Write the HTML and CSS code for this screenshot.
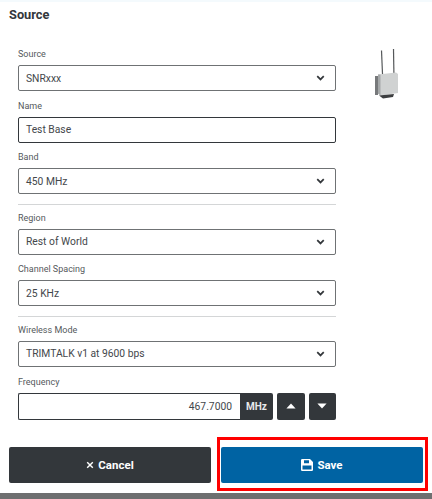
FILE: index.html
```html
<!DOCTYPE html>
<html lang="en">
<head>
    <meta charset="UTF-8">
    <meta name="viewport" content="width=device-width, initial-scale=1.0">
    <title>Source</title>
    <link rel="stylesheet" href="styles.css">
</head>
<body>

    <div class="page">
        <h1 class="title">Source</h1>

        <div class="content">
            <form class="fields">
                <div class="field">
                    <label class="label">Source</label>
                    <div class="box select"><span>SNRxxx</span><svg class="chevron" viewBox="0 0 10 7"><path d="M1.200 1.400 5 5.200l3.800-3.800"/></svg></div>
                </div>
                <div class="field">
                    <label class="label">Name</label>
                    <div class="box text"><span>Test Base</span></div>
                </div>
                <div class="field">
                    <label class="label">Band</label>
                    <div class="box select"><span>450 MHz</span><svg class="chevron" viewBox="0 0 10 7"><path d="M1.200 1.400 5 5.200l3.800-3.800"/></svg></div>
                </div>

                <hr class="divider">

                <div class="field">
                    <label class="label">Region</label>
                    <div class="box select"><span>Rest of World</span><svg class="chevron" viewBox="0 0 10 7"><path d="M1.200 1.400 5 5.200l3.800-3.800"/></svg></div>
                </div>
                <div class="field">
                    <label class="label">Channel Spacing</label>
                    <div class="box select"><span>25 KHz</span><svg class="chevron" viewBox="0 0 10 7"><path d="M1.200 1.400 5 5.200l3.800-3.800"/></svg></div>
                </div>

                <hr class="divider">

                <div class="field">
                    <label class="label">Wireless Mode</label>
                    <div class="box select"><span>TRIMTALK v1 at 9600 bps</span><svg class="chevron" viewBox="0 0 10 7"><path d="M1.200 1.400 5 5.200l3.800-3.800"/></svg></div>
                </div>
                <div class="field">
                    <label class="label">Frequency</label>
                    <div class="freq">
                        <div class="box text number"><span>467.7000</span></div>
                        <div class="unit">MHz</div>
                        <button type="button" class="step"><svg viewBox="0 0 10 6"><path d="M5 0.500 9.600 5.500H0.400z"/></svg></button>
                        <button type="button" class="step"><svg viewBox="0 0 10 6"><path d="M5 5.500 0.400 0.500H9.600z"/></svg></button>
                    </div>
                </div>
            </form>

            <div class="device">
                <svg viewBox="0 0 26 52" width="26" height="52">
                    <path d="M7.500 1.500 8.500 25" stroke="#55585a" stroke-width="1.200" fill="none"/>
                    <path d="M19.500 0 19.900 24" stroke="#55585a" stroke-width="1.200" fill="none"/>
                    <path d="M1 27h3v19H1z" fill="#77797b"/>
                    <path d="M4 25.500 22 23.500 24 25v19l-17 2.500-3-2z" fill="#d0d2d2"/>
                    <path d="M4 25.500h2.500v21l-2.500-2z" fill="#a5a8a9"/>
                    <path d="M5 46.500 20 45l-1 3-10 1.500z" fill="#3c3e40"/>
                </svg>
            </div>
        </div>

        <div class="actions">
            <button type="button" class="btn cancel">
                <svg class="btn-icon small" viewBox="0 0 10 10"><path d="M1.500 1.500l7 7M8.500 1.500l-7 7"/></svg>
                Cancel
            </button>
            <div class="save-wrap">
                <button type="button" class="btn save">
                    <svg class="btn-icon" viewBox="0 0 12 12"><path class="save-shape" d="M0 1.200A1.200 1.200 0 0 1 1.200 0h7.800L12 3v7.800a1.200 1.200 0 0 1-1.200 1.200H1.200A1.200 1.200 0 0 1 0 10.800z M3 1.200v3h5v-3z M1.500 6.500v4h9v-4z"/></svg>
                    Save
                </button>
            </div>
        </div>
    </div>

    <div class="bottom-bar"></div>

</body>
</html>
```

FILE: styles.css
```css
* {
    box-sizing: border-box;
}

html,
body {
    height: 100%;
}

body {
    margin: 0;
    font-family: Roboto, "Liberation Sans", sans-serif;
    background-color: #ffffff;
    color: #3b3f43;
    overflow: hidden;
    display: flex;
    flex-direction: column;
}

.page {
    flex: 1;
    padding: 5px 9px 0;
    border-top: 2px solid #f4fafd;
    display: flex;
    flex-direction: column;
}

.title {
    margin: 0;
    font-size: 12.800px;
    line-height: 15px;
    font-weight: 700;
    color: #33373b;
}

.content {
    display: flex;
    padding: 27px 0 0 9px;
}

.fields {
    width: 318px;
}

.field {
    margin-bottom: 9.600px;
}

.label {
    display: block;
    font-size: 9px;
    line-height: 11px;
    margin-bottom: 5px;
    color: #55595c;
}

.box {
    height: 26px;
    display: flex;
    align-items: center;
    justify-content: space-between;
    padding: 0 10px 0 7px;
    font-size: 10.300px;
    color: #43474b;
    background-color: #ffffff;
    border-radius: 2px;
    border: 1px solid #33373b;
}

.select {
    border-color: #6f7274;
}

.chevron {
    width: 9px;
    height: 6px;
}

.chevron path {
    fill: none;
    stroke: #33373b;
    stroke-width: 2;
}

.divider {
    border: 0;
    border-top: 1px solid #d4d6d7;
    margin: 0 0 8px;
}

.freq {
    display: flex;
    height: 27px;
}

.number {
    flex: 1;
    height: 100%;
    justify-content: flex-end;
    padding-right: 8px;
    border-radius: 2px 0 0 2px;
    border-right: 0;
}

.unit {
    width: 33px;
    background-color: #33373b;
    color: #e8e9ea;
    font-size: 10px;
    font-weight: 700;
    display: flex;
    align-items: center;
    justify-content: center;
    border-radius: 0 2px 2px 0;
}

.step {
    width: 27.500px;
    margin-left: 4px;
    padding: 0;
    border: 0;
    background-color: #33373b;
    border-radius: 2px;
    display: flex;
    align-items: center;
    justify-content: center;
}

.step svg {
    width: 10px;
    height: 6px;
    fill: #ffffff;
}

.device {
    margin: 0 0 0 38px;
    filter: blur(0.4px);
}

.actions {
    display: flex;
    justify-content: space-between;
    margin-top: 17.400px;
}

.btn {
    width: 202px;
    height: 36px;
    border: 0;
    border-radius: 2px;
    color: #ffffff;
    font-family: inherit;
    font-size: 11.500px;
    font-weight: 700;
    display: flex;
    align-items: center;
    justify-content: center;
    gap: 4px;
}

.cancel {
    background-color: #33373b;
}

.save {
    background-color: #0063a3;
}

.save-wrap {
    position: relative;
}

/* red highlight round the save button */
.save-wrap::after {
    content: "";
    position: absolute;
    top: -10px;
    right: -5px;
    bottom: -8px;
    left: -4px;
    border: 3px solid #ff0000;
    pointer-events: none;
}

.btn-icon {
    width: 12px;
    height: 12px;
}

.btn-icon.small {
    width: 8px;
    height: 8px;
}

.btn-icon.small path {
    fill: none;
    stroke: #ffffff;
    stroke-width: 1.800;
}

.save-shape {
    fill: #ffffff;
    fill-rule: evenodd;
}

.bottom-bar {
    height: 6px;
    background-color: #6e6f70;
}
```
